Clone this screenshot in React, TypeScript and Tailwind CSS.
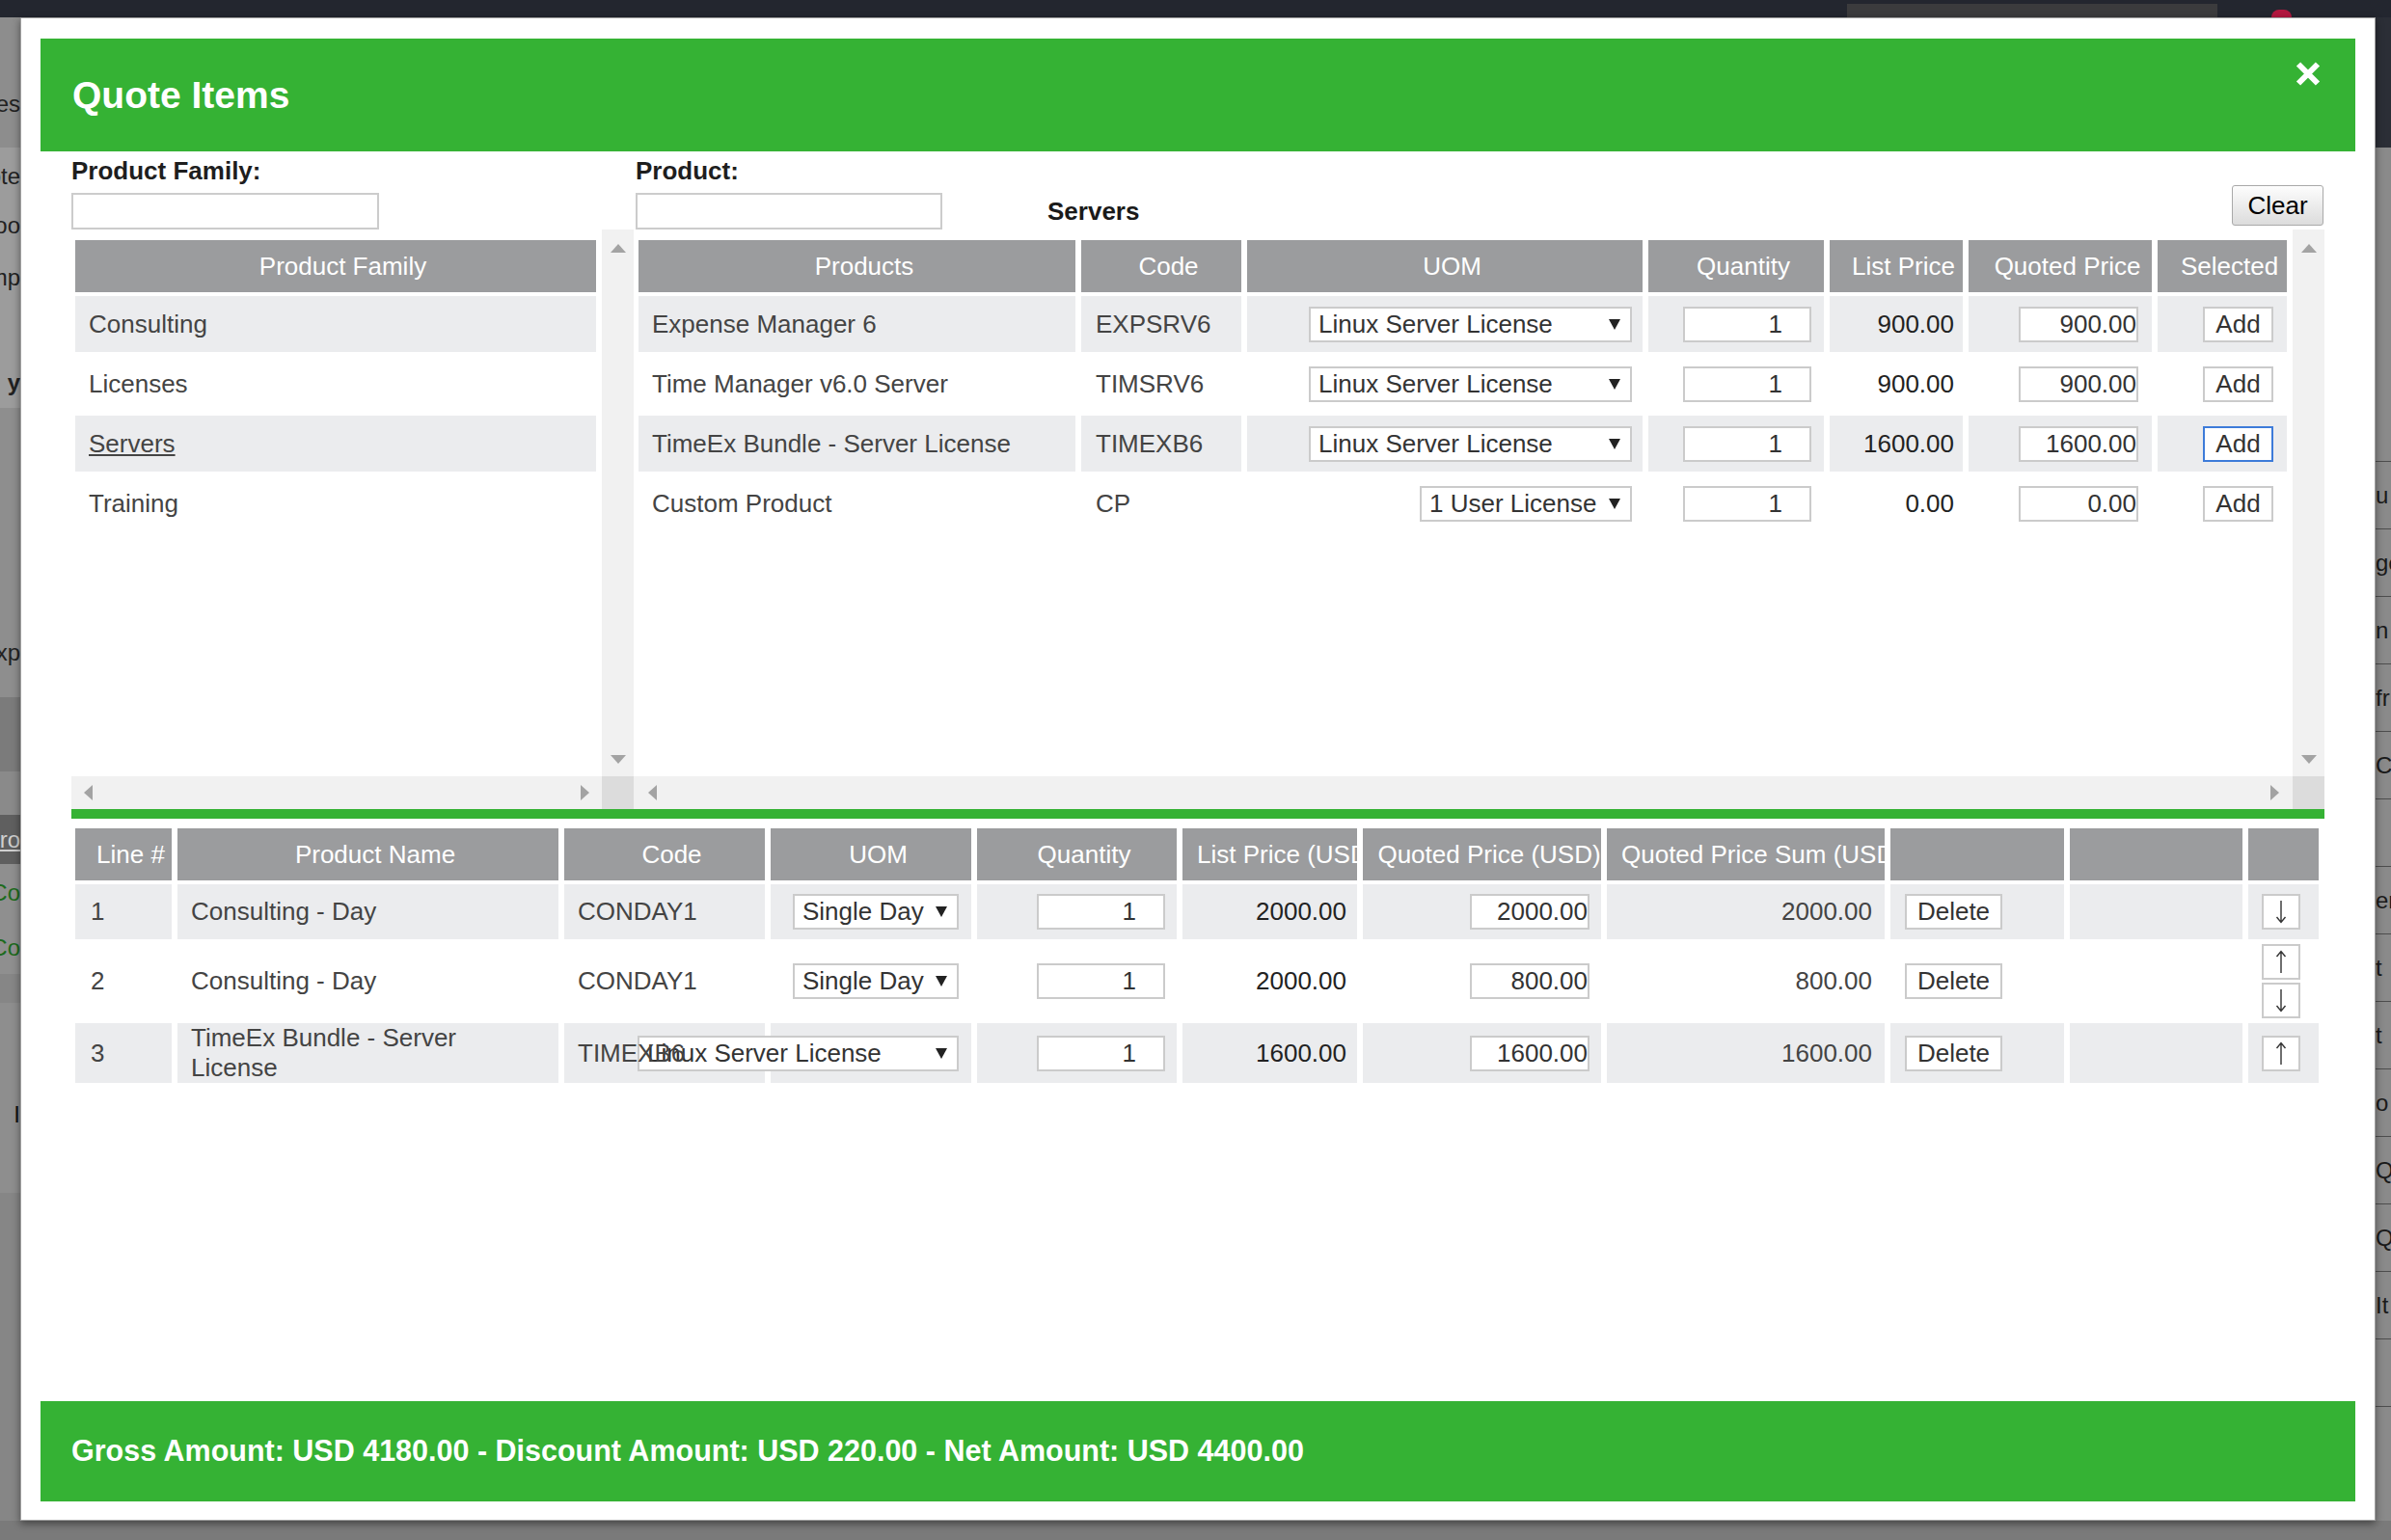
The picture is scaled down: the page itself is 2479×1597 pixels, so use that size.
import React from 'react'

const products = [
  { name: 'Expense Manager 6', code: 'EXPSRV6', uom: 'Linux Server License', wide: true, list: '900.00', quoted: '900.00', focus: false },
  { name: 'Time Manager v6.0 Server', code: 'TIMSRV6', uom: 'Linux Server License', wide: true, list: '900.00', quoted: '900.00', focus: false },
  { name: 'TimeEx Bundle - Server License', code: 'TIMEXB6', uom: 'Linux Server License', wide: true, list: '1600.00', quoted: '1600.00', focus: true },
  { name: 'Custom Product', code: 'CP', uom: '1 User License', wide: false, list: '0.00', quoted: '0.00', focus: false },
]

const lines = [
  { n: '1', name: ['Consulting - Day'], code: 'CONDAY1', uom: 'Single Day', wide: false, list: '2000.00', quoted: '2000.00', sum: '2000.00', arrows: ['down'], h: 'h-[57px]' },
  { n: '2', name: ['Consulting - Day'], code: 'CONDAY1', uom: 'Single Day', wide: false, list: '2000.00', quoted: '800.00', sum: '800.00', arrows: ['up', 'down'], h: 'h-[79px]' },
  { n: '3', name: ['TimeEx Bundle - Server', 'License'], code: 'TIMEXB6', uom: 'Linux Server License', wide: true, list: '1600.00', quoted: '1600.00', sum: '1600.00', arrows: ['up'], h: 'h-[62px]' },
]

const families = ['Consulting', 'Licenses', 'Servers', 'Training']

const leftStrip: [string, string, string?, string?][] = [
  ['h-[72px]', 'bg-[#8d8d8d]'],
  ['h-[35px]', 'bg-[#8d8d8d]', 'Notes', 'text-[#222]'],
  ['h-[28px]', 'bg-[#8d8d8d]'],
  ['h-[13px]', 'bg-[#9c9c9c]'],
  ['h-[34px]', 'bg-[#9c9c9c]', 'Quote', 'text-[#222]'],
  ['h-[17px]', 'bg-[#9c9c9c]'],
  ['h-[34px]', 'bg-[#9c9c9c]', 'Shipoo', 'text-[#222]'],
  ['h-[20px]', 'bg-[#9c9c9c]'],
  ['h-[34px]', 'bg-[#9c9c9c]', 'Comp', 'text-[#222]'],
  ['h-[75px]', 'bg-[#9c9c9c]'],
  ['h-[34px]', 'bg-[#9c9c9c]', 'y', 'text-[#222] font-bold'],
  ['h-[9px]', 'bg-[#9c9c9c]'],
  ['h-[237px]', 'bg-[#8e8e8e]'],
  ['h-[34px]', 'bg-[#8e8e8e]', 'Exp', 'text-[#222]'],
  ['h-[29px]', 'bg-[#8e8e8e]'],
  ['h-[77px]', 'bg-[#7b7b7b]'],
  ['h-[45px]', 'bg-[#8a8a8a]'],
  ['h-[51px]', 'bg-[#5f5f5f]', 'Pro', 'text-[#cfcfcf] underline'],
  ['h-[59px]', 'bg-[#8f8f8f]', 'Co', 'text-[#1d6b1d]'],
  ['h-[55px]', 'bg-[#8f8f8f]', 'Co', 'text-[#1d6b1d]'],
  ['h-[30px]', 'bg-[#868686]'],
  ['h-[100px]', 'bg-[#8e8e8e]'],
  ['h-[32px]', 'bg-[#8e8e8e]', 'I', 'text-[#111]'],
  ['h-[65px]', 'bg-[#8e8e8e]'],
]

const rightStrip = ['u', 'ge', 'n', 'fr', 'Co', '', 'er', 't', 't', 'o', 'Qu', 'Q', 'It', '', '']

function Caret() {
  return (
    <svg width="12" height="13" viewBox="0 0 12 13" className="shrink-0">
      <path d="M0 1h12L6 12z" fill="#222" />
    </svg>
  )
}

function Arrow({ dir }: { dir: string }) {
  return (
    <svg width="12" height="25" viewBox="0 0 12 25">
      {dir === 'down' ? (
        <path d="M6 1V23.5M1.5 18L6 23.5L10.5 18" stroke="#333" strokeWidth="1.4" fill="none" />
      ) : (
        <path d="M6 24V1.5M1.5 7L6 1.5L10.5 7" stroke="#333" strokeWidth="1.4" fill="none" />
      )}
    </svg>
  )
}

function Select({ label, className }: { label: string; className: string }) {
  return (
    <div className={`h-[37px] shrink-0 bg-white border-2 border-[#cbcbcb] flex items-center justify-between pl-[8px] pr-[10px] text-[#333] ${className}`}>
      <span className="whitespace-nowrap">{label}</span>
      <Caret />
    </div>
  )
}

function NumBox({ value, className }: { value: string; className: string }) {
  return (
    <input
      readOnly
      value={value}
      className={`h-[37px] shrink-0 bg-white border-2 border-[#cbcbcb] text-right text-[#333] outline-none ${className}`}
    />
  )
}

function Tri({ dir }: { dir: 'up' | 'down' | 'left' | 'right' }) {
  if (dir === 'up') return <svg width="16" height="9" viewBox="0 0 16 9"><path d="M0 9L8 0L16 9z" fill="#a3a3a3" /></svg>
  if (dir === 'down') return <svg width="16" height="9" viewBox="0 0 16 9"><path d="M0 0L8 9L16 0z" fill="#a3a3a3" /></svg>
  if (dir === 'left') return <svg width="9" height="16" viewBox="0 0 9 16"><path d="M9 0L0 8L9 16z" fill="#a3a3a3" /></svg>
  return <svg width="9" height="16" viewBox="0 0 9 16"><path d="M0 0L9 8L0 16z" fill="#a3a3a3" /></svg>
}

function VScroll() {
  return (
    <div className="w-[33px] bg-[#f1f1f1] flex flex-col items-center justify-between pt-[15px] pb-[13px]">
      <Tri dir="up" />
      <Tri dir="down" />
    </div>
  )
}

function HScroll({ pad }: { pad: string }) {
  return (
    <div className="h-[34px] flex">
      <div className={`flex-1 bg-[#f1f1f1] flex items-center justify-between ${pad}`}>
        <Tri dir="left" />
        <Tri dir="right" />
      </div>
      <div className="w-[33px] bg-[#dcdcdc]" />
    </div>
  )
}

const head = 'h-[54px] leading-[54px] bg-[#9b9c9e] text-white text-center whitespace-nowrap overflow-hidden pl-[15px]'

export default function App() {
  return (
    <div className="w-[2479px] h-[1597px] bg-[#7a7a7a] flex flex-col overflow-hidden font-['Liberation_Sans',Arial,sans-serif] text-[26px] text-[#444]">
      {/* page top bar behind the dialog */}
      <div className="h-[18px] shrink-0 bg-[#23262f] flex">
        <div className="ml-[1915px] mt-[4px] w-[384px] h-[14px] bg-[#3b3b3d]" />
        <div className="ml-[56px] mt-[10px] w-[21px] h-[8px] rounded-t-full bg-[#b3173f]" />
      </div>

      <div className="h-[1559px] shrink-0 flex">
        {/* left page strip */}
        <div className="w-[21px] flex flex-col overflow-hidden">
          {leftStrip.map(([h, bg, text, tc], i) => (
            <div key={i} className={`${h} ${bg} shrink-0 flex items-center justify-end overflow-hidden`}>
              {text && <span className={`shrink-0 whitespace-nowrap text-[24px] ${tc}`}>{text}</span>}
            </div>
          ))}
          <div className="flex-1 bg-[#868686]" />
        </div>

        {/* dialog */}
        <div className="w-[2442px] h-full bg-white border border-[#a0a0a0] px-[20px] pt-[21px] pb-[19px] flex flex-col shadow-[0_3px_8px_rgba(0,0,0,0.45)] relative z-10">
          <div className="h-[117px] shrink-0 bg-[#35b234] flex justify-between pl-[33px] pr-[35px]">
            <h1 className="self-center text-[39px] font-bold text-white leading-none">Quote Items</h1>
            <svg className="mt-[23px]" width="28" height="27" viewBox="0 0 28 27">
              <path d="M4 3.5L24 23.5M24 3.5L4 23.5" stroke="#fff" strokeWidth="6" />
            </svg>
          </div>

          <div className="flex-1 px-[32px] flex flex-col">
            {/* filters */}
            <div className="flex mt-[5px]">
              <div className="w-[585px] flex flex-col">
                <div className="text-[26px] leading-[30px] font-bold text-[#1e1e1e]">Product Family:</div>
                <input readOnly className="mt-[8px] w-[319px] h-[38px] border-2 border-[#cccccc] outline-none" />
              </div>
              <div className="flex-1 flex flex-col">
                <div className="text-[26px] leading-[30px] font-bold text-[#1e1e1e]">Product:</div>
                <div className="mt-[8px] flex items-start">
                  <input readOnly className="w-[318px] h-[38px] border-2 border-[#cccccc] outline-none" />
                  <div className="ml-[109px] mt-[4px] text-[26px] leading-[30px] font-bold text-[#1a1a1a]">Servers</div>
                  <button className="ml-auto mr-[1px] -mt-[8px] w-[95px] h-[42px] border border-[#a9a9a9] rounded-[3px] bg-linear-to-b from-[#fdfdfd] to-[#dcdcdc] text-[26px] text-black">
                    Clear
                  </button>
                </div>
              </div>
            </div>

            {/* pickers */}
            <div className="flex h-[601px]">
              <div className="w-[583px] flex flex-col">
                <div className="flex-1 flex">
                  <div className="flex-1 pl-[4px] pt-[11px] overflow-hidden flex flex-col gap-[4px]">
                    <div className={`${head} w-[540px]`}>Product Family</div>
                    {families.map((f, i) => (
                      <div
                        key={f}
                        className={`w-[540px] h-[58px] flex items-center pl-[14px] ${i % 2 === 0 ? 'bg-[#ebecee]' : 'bg-white'}`}
                      >
                        <span className={f === 'Servers' ? 'underline' : ''}>{f}</span>
                      </div>
                    ))}
                  </div>
                  <VScroll />
                </div>
                <HScroll pad="px-[13px]" />
              </div>

              <div className="flex-1 flex flex-col">
                <div className="flex-1 flex">
                  <div className="flex-1 pl-[5px] pt-[11px] overflow-hidden flex flex-col gap-[4px]">
                    <div className="grid grid-cols-[453px_166px_410px_182px_138px_190px_134px] gap-x-[6px]">
                      <div className={head}>Products</div>
                      <div className={head}>Code</div>
                      <div className={head}>UOM</div>
                      <div className={head}>Quantity</div>
                      <div className={head}>List Price</div>
                      <div className={head}>Quoted Price</div>
                      <div className={head}>Selected</div>
                    </div>
                    {products.map((p, i) => {
                      const bg = i % 2 === 0 ? 'bg-[#ebecee]' : 'bg-white'
                      return (
                        <div key={p.code} className="grid grid-cols-[453px_166px_410px_182px_138px_190px_134px] gap-x-[6px] h-[58px]">
                          <div className={`${bg} flex items-center pl-[14px] whitespace-nowrap overflow-hidden`}>{p.name}</div>
                          <div className={`${bg} flex items-center pl-[15px]`}>{p.code}</div>
                          <div className={`${bg} flex items-center justify-end pr-[11px]`}>
                            <Select label={p.uom} className={p.wide ? 'w-[335px]' : 'w-[220px]'} />
                          </div>
                          <div className={`${bg} flex items-center justify-end pr-[13px]`}>
                            <NumBox value="1" className="w-[133px] pr-[28px]" />
                          </div>
                          <div className={`${bg} flex items-center justify-end pr-[9px] text-[#222]`}>{p.list}</div>
                          <div className={`${bg} flex items-center justify-end pr-[14px]`}>
                            <NumBox value={p.quoted} className="w-[124px] pr-0" />
                          </div>
                          <div className={`${bg} flex items-center justify-end pr-[14px]`}>
                            <button
                              className={`w-[73px] h-[37px] bg-white border-2 text-[#333] flex items-center justify-center ${p.focus ? 'border-[#3d7bd9]' : 'border-[#cbcbcb]'}`}
                            >
                              Add
                            </button>
                          </div>
                        </div>
                      )
                    })}
                  </div>
                  <VScroll />
                </div>
                <HScroll pad="pl-[15px] pr-[14px]" />
              </div>
            </div>

            <div className="h-[10px] bg-[#35b234]" />

            {/* quote lines */}
            <div className="mt-[10px] pl-[4px] flex flex-col gap-[4px]">
              <div className="grid grid-cols-[100px_395px_208px_208px_207px_181px_247px_288px_180px_179px_73px] gap-x-[6px]">
                <div className={head}>Line #</div>
                <div className={head}>Product Name</div>
                <div className={head}>Code</div>
                <div className={head}>UOM</div>
                <div className={head}>Quantity</div>
                <div className={head}>List Price (USD)</div>
                <div className={head}>Quoted Price (USD)</div>
                <div className={head}>Quoted Price Sum (USD)</div>
                <div className={head}></div>
                <div className={head}></div>
                <div className={head}></div>
              </div>
              {lines.map((l, i) => {
                const bg = i % 2 === 0 ? 'bg-[#ebecee]' : 'bg-white'
                return (
                  <div key={l.n} className={`grid grid-cols-[100px_395px_208px_208px_207px_181px_247px_288px_180px_179px_73px] gap-x-[6px] ${l.h}`}>
                    <div className={`${bg} flex items-center pl-[16px]`}>{l.n}</div>
                    <div className={`${bg} flex flex-col justify-center pl-[14px] leading-[31px]`}>
                      {l.name.map((s) => (
                        <span key={s}>{s}</span>
                      ))}
                    </div>
                    <div className={`${bg} flex items-center pl-[14px]`}>
                      <span className="relative z-10">{l.code}</span>
                    </div>
                    <div className={`${bg} flex items-center justify-end pr-[13px]`}>
                      <Select label={l.uom} className={l.wide ? 'w-[333px]' : 'w-[172px]'} />
                    </div>
                    <div className={`${bg} flex items-center justify-end pr-[12px]`}>
                      <NumBox value="1" className="w-[133px] pr-[28px]" />
                    </div>
                    <div className={`${bg} flex items-center justify-end pr-[11px] text-[#222]`}>{l.list}</div>
                    <div className={`${bg} flex items-center justify-end pr-[12px]`}>
                      <NumBox value={l.quoted} className="w-[124px] pr-0" />
                    </div>
                    <div className={`${bg} flex items-center justify-end pr-[13px]`}>{l.sum}</div>
                    <div className={`${bg} flex items-center pl-[15px]`}>
                      <button className="w-[101px] h-[37px] bg-white border-2 border-[#cbcbcb] text-[#333] flex items-center justify-center">
                        Delete
                      </button>
                    </div>
                    <div className={bg} />
                    <div className={`${bg} flex flex-col justify-center gap-[3px] pl-[14px]`}>
                      {l.arrows.map((a) => (
                        <button
                          key={a}
                          className="w-[40px] h-[37px] bg-white border-2 border-[#cbcbcb] flex items-center justify-center"
                        >
                          <Arrow dir={a} />
                        </button>
                      ))}
                    </div>
                  </div>
                )
              })}
            </div>
          </div>

          <div className="h-[104px] shrink-0 bg-[#35b234] flex items-center pl-[32px] text-white font-bold text-[30.5px]">
            Gross Amount: USD 4180.00 - Discount Amount: USD 220.00 - Net Amount: USD 4400.00
          </div>
        </div>

        {/* right page strip */}
        <div className="w-[16px] flex flex-col overflow-hidden">
          <div className="h-[135px] shrink-0 bg-[#2b2e36]" />
          <div className="h-[325px] shrink-0 bg-[#8a8a8a]" />
          {rightStrip.map((t, i) => (
            <div key={i} className="h-[70px] shrink-0 bg-[#8a8a8a] border-t border-[#4d4d4d] flex items-center overflow-hidden">
              <span className="shrink-0 whitespace-nowrap text-[24px] text-[#1a1a1a]">{t}</span>
            </div>
          ))}
          <div className="flex-1 bg-[#8a8a8a]" />
        </div>
      </div>

      <div className="flex-1 bg-[#7a7a7a]" />
    </div>
  )
}
